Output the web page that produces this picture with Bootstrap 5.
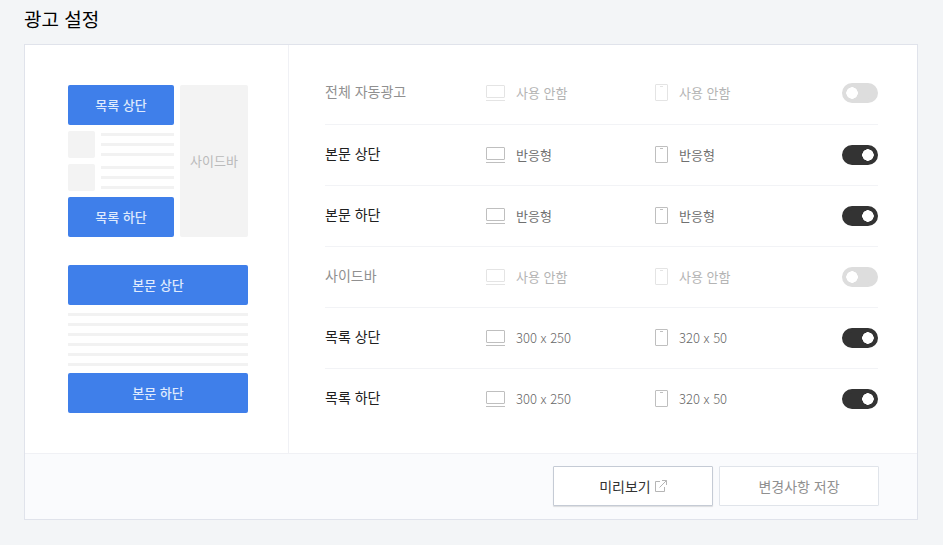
<!DOCTYPE html>
<html lang="ko">
<head>
<meta charset="utf-8">
<meta name="viewport" content="width=device-width, initial-scale=1">
<title>광고 설정</title>
<link href="https://cdn.jsdelivr.net/npm/bootstrap@5.3.0/dist/css/bootstrap.min.css" rel="stylesheet">
<style>
body { background: #f3f5f7; color: #000; font-family: "Noto Sans CJK KR", sans-serif; font-size: 14px; line-height: 20px; }
.page { padding: 4px 25px 24px 24px; }
.page-title { font-size: 19px; line-height: 30px; margin-bottom: 10px; font-weight: 400; }
.panel { background: #fff; border: 1px solid #e0e3eb; }
.preview { flex: 0 0 264px; padding: 40px 40px 40px 43px; border-right: 1px solid #f0f1f5; }
.slot { display: flex; align-items: center; justify-content: center; height: 40px; border-radius: 2px; background: #3f7fea; color: #dfeafd; font-size: 13px; font-weight: 500; }
.list-part { gap: 6px; margin-bottom: 28px; }
.list-main { gap: 6px; }
.side-slot { flex: 0 0 68px; height: auto; background: #f3f3f3; color: #bababa; font-weight: 400; }
.post { gap: 6px; }
.thumb { width: 27px; height: 27px; border-radius: 2px; background: #f3f3f3; }
.lines { display: grid; gap: 7px; align-content: center; }
.lines span { height: 3px; background: #f2f2f2; }
.post .lines { padding-bottom: 1px; }
.body-lines { padding: 8px 0 7px; }
.settings { padding: 18px 39px 24px 36px; }
.setting { display: grid; grid-template-columns: 161fr 169fr 187fr 36px; align-items: center; padding: 20px 0; border-bottom: 1px solid #f2f3f6; }
.setting:first-child { padding-bottom: 21px; }
.setting:last-child { border-bottom: 0; }
.setting-name { color: #202020; line-height: 16px; padding-bottom: 4px; }
.option { display: flex; align-items: center; color: #707070; font-size: 13px; }
.option svg { margin-right: 11px; color: #bfbfbf; }
.size { font-weight: 300; color: #666; }
.is-off .setting-name { color: #909090; }
.is-off .option { color: #b4b4b4; }
.is-off .option svg { color: #e4e4e4; }
.toggle.form-check-input { width: 36px; height: 20px; margin: 0; border: 4px solid #ddd; border-radius: 10px; background: #ddd radial-gradient(circle 6px at 6px 6px, #fff 92%, #ddd 100%) 0 0 / 100% 100% no-repeat; cursor: pointer; }
.toggle.form-check-input:checked { border-color: #333; background-color: #333; background-image: radial-gradient(circle 6px at 22px 6px, #fff 92%, #333 100%); }
.actions { padding: 12px 38px 13px 24px; gap: 6px; background: #fafbfd; border-top: 1px solid #f0f1f5; }
.action.btn { width: 160px; height: 40px; padding: 0 8px; border: 1px solid #e0e4ea; border-radius: 1px; background: #fff; color: #909090; font-size: 14px; line-height: 20px; }
.action-preview.btn { border-color: #c5cbd5; color: #333; box-shadow: 0 1px 1px rgba(0,0,0,.12); }
</style>
<script defer src="https://cdn.jsdelivr.net/npm/bootstrap@5.3.0/dist/js/bootstrap.bundle.min.js"></script>
</head>
<body>
<svg class="d-none" aria-hidden="true">
  <symbol id="desktop" viewBox="0 0 19 16"><rect x=".5" y=".5" width="18" height="12" rx=".5" fill="none" stroke="currentColor"/><path d="M0 15.5h19" stroke="currentColor"/></symbol>
  <symbol id="mobile" viewBox="0 0 13 18"><rect x=".5" y=".5" width="12" height="16" rx=".5" fill="none" stroke="currentColor"/><path d="M5 2.5h3" stroke="currentColor"/></symbol>
</svg>
<main class="page">
  <h1 class="page-title">광고 설정</h1>
  <section class="panel">
    <div class="d-flex">
      <div class="preview">
        <div class="list-part d-flex">
          <div class="list-main d-flex flex-column flex-grow-1">
            <div class="slot">목록 상단</div>
            <div class="post d-flex"><div class="thumb"></div><div class="lines flex-grow-1"><span></span><span></span><span></span></div></div>
            <div class="post d-flex"><div class="thumb"></div><div class="lines flex-grow-1"><span></span><span></span><span></span></div></div>
            <div class="slot">목록 하단</div>
          </div>
          <div class="slot side-slot">사이드바</div>
        </div>
        <div class="slot">본문 상단</div>
        <div class="lines body-lines"><span></span><span></span><span></span><span></span><span></span><span></span></div>
        <div class="slot">본문 하단</div>
      </div>
      <div class="settings flex-grow-1">
        <div class="setting is-off">
          <label class="setting-name" for="auto">전체 자동광고</label>
          <div class="option"><svg width="19" height="16"><use href="#desktop"/></svg>사용 안함</div>
          <div class="option"><svg width="13" height="18"><use href="#mobile"/></svg>사용 안함</div>
          <input class="form-check-input toggle" type="checkbox" role="switch" id="auto">
        </div>
        <div class="setting">
          <label class="setting-name" for="body-top">본문 상단</label>
          <div class="option"><svg width="19" height="16"><use href="#desktop"/></svg>반응형</div>
          <div class="option"><svg width="13" height="18"><use href="#mobile"/></svg>반응형</div>
          <input class="form-check-input toggle" type="checkbox" role="switch" id="body-top" checked>
        </div>
        <div class="setting">
          <label class="setting-name" for="body-bottom">본문 하단</label>
          <div class="option"><svg width="19" height="16"><use href="#desktop"/></svg>반응형</div>
          <div class="option"><svg width="13" height="18"><use href="#mobile"/></svg>반응형</div>
          <input class="form-check-input toggle" type="checkbox" role="switch" id="body-bottom" checked>
        </div>
        <div class="setting is-off">
          <label class="setting-name" for="sidebar">사이드바</label>
          <div class="option"><svg width="19" height="16"><use href="#desktop"/></svg>사용 안함</div>
          <div class="option"><svg width="13" height="18"><use href="#mobile"/></svg>사용 안함</div>
          <input class="form-check-input toggle" type="checkbox" role="switch" id="sidebar">
        </div>
        <div class="setting">
          <label class="setting-name" for="list-top">목록 상단</label>
          <div class="option size"><svg width="19" height="16"><use href="#desktop"/></svg>300 x 250</div>
          <div class="option size"><svg width="13" height="18"><use href="#mobile"/></svg>320 x 50</div>
          <input class="form-check-input toggle" type="checkbox" role="switch" id="list-top" checked>
        </div>
        <div class="setting">
          <label class="setting-name" for="list-bottom">목록 하단</label>
          <div class="option size"><svg width="19" height="16"><use href="#desktop"/></svg>300 x 250</div>
          <div class="option size"><svg width="13" height="18"><use href="#mobile"/></svg>320 x 50</div>
          <input class="form-check-input toggle" type="checkbox" role="switch" id="list-bottom" checked>
        </div>
      </div>
    </div>
    <div class="actions d-flex justify-content-end">
      <button type="button" class="btn action action-preview d-flex align-items-center justify-content-center gap-1">미리보기
        <svg width="12" height="12" viewBox="0 0 12 12" fill="none" stroke="#b5b5b5" aria-hidden="true"><path d="M5 1.500H.5v10h9V7M7 .5h4.500V5M11.500 .5L4.500 7.500"/></svg>
      </button>
      <button type="button" class="btn action">변경사항 저장</button>
    </div>
  </section>
</main>
</body>
</html>
